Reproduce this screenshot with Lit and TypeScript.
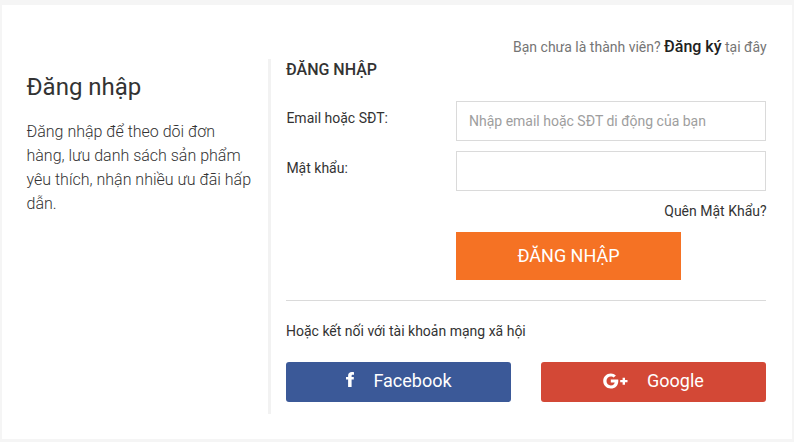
import { LitElement, html, css } from "lit";
import { customElement } from "lit/decorators.js";

const facebookIcon = html`<svg class="fb" width="8" height="16" viewBox="0 0 8 16" fill="currentColor" aria-hidden="true">
  <path d="M8 0.3V2.8H6.9C5.9 2.8 5.6 3.2 5.6 4V5.1H7.8V7.4H5.6V15H2.1V7.4H0V5.1H2.1V3.8C2.1 1.4 3.6 0.1 5.9 0.1C6.8 0.1 7.5 0.2 8 0.3Z"/>
</svg>`;

const googleIcon = html`<svg class="gp" width="25" height="16" viewBox="0 0 25 16" aria-hidden="true">
  <path fill="currentColor" d="M7.8 6.4H15.2C15.3 6.9 15.3 7.4 15.3 7.9C15.3 12.4 12.3 15.5 7.8 15.5C3.5 15.5 0.2 12.2 0.2 8C0.2 3.8 3.5 0.5 7.8 0.5C9.8 0.5 11.6 1.2 12.9 2.5L10.7 4.6C10.1 4.1 9.2 3.6 7.8 3.6C5.4 3.6 3.5 5.5 3.5 8C3.5 10.5 5.4 12.4 7.8 12.4C10.4 12.4 11.5 10.8 11.7 9.4H7.8ZM19.6 4.7H22V7H24.5V9.3H22V11.7H19.6V9.3H17.2V7H19.6Z"/>
</svg>`;

@customElement("app-root")
export class AppRoot extends LitElement {
  static styles = css`
    :host {
      display: block;
      box-sizing: border-box;
      height: 442px;
      padding: 5px 2px 3px;
      background: #f5f5f5;
      font: 14px/20px Roboto, "Noto Sans", sans-serif;
      color: #333;
    }
    *, *::before { box-sizing: border-box; }
    h1, h2, p { margin: 0; }
    a { color: inherit; text-decoration: none; }
    .panel {
      display: flex;
      height: 434px;
      padding: 0 26px 25px 24.5px;
      background: #fff;
    }
    .intro { width: 241.5px; padding-top: 66px; }
    .intro h1 { font-size: 24px; line-height: 32px; font-weight: 400; }
    .intro p { width: 230px; margin-top: 17px; font-size: 16px; line-height: 24px; font-weight: 300; }
    .divider { width: 3px; margin-top: 54px; background: #f2f2f2; }
    .content { flex: 1; padding: 31px 0 0 15px; }
    .join { height: 22px; margin-right: -0.6px; line-height: 22px; text-align: right; color: #757575; white-space: nowrap; }
    .join a { font-size: 16px; font-weight: 500; color: #212121; }
    .content h2 { height: 20px; margin-top: 2px; font-size: 16px; font-weight: 500; }
    form {
      display: grid;
      grid-template-columns: 170px 310px;
      margin-top: 21px;
    }
    label { padding: 7px 0 0 0.4px; }
    input {
      width: 310px;
      height: 40px;
      margin-bottom: 10px;
      padding: 0 12px;
      border: 1px solid #dadada;
      border-radius: 0;
      outline: 0;
      background: #fff;
      font: inherit;
      color: #333;
    }
    input::placeholder { color: #9e9e9e; opacity: 1; }
    .forgot { grid-column: 2; margin-right: -0.6px; text-align: right; }
    .submit {
      grid-column: 2;
      width: 225px;
      height: 48px;
      margin-top: 11px;
      padding: 0;
      border: 0;
      background: #f57224;
      color: #fff;
      font: 400 18px/48px Roboto, sans-serif;
    }
    .social { margin-top: 20px; padding-top: 20px; border-top: 1px solid #dadada; }
    .buttons { display: flex; gap: 30px; margin-top: 21px; }
    .button {
      display: flex;
      align-items: center;
      justify-content: center;
      width: 225px;
      height: 40px;
      padding: 0 0 2px;
      border: 0;
      border-radius: 3px;
      color: #fff;
      font: 400 18px/38px Roboto, sans-serif;
    }
    .facebook { background: #3b5998; }
    .google { background: #d34836; }
    .fb { margin: 0 19px 2px 1px; }
    .gp { margin-right: 19px; }
  `;

  render() {
    return html`
      <div class="panel">
        <aside class="intro">
          <h1>Đăng nhập</h1>
          <p>Đăng nhập để theo dõi đơn hàng, lưu danh sách sản phẩm yêu thích, nhận nhiều ưu đãi hấp dẫn.</p>
        </aside>
        <div class="divider"></div>
        <main class="content">
          <p class="join">Bạn chưa là thành viên? <a href="#">Đăng ký</a> tại đây</p>
          <h2>ĐĂNG NHẬP</h2>
          <form>
            <label for="email">Email hoặc SĐT:</label>
            <input id="email" type="text" placeholder="Nhập email hoặc SĐT di động của bạn" />
            <label for="password">Mật khẩu:</label>
            <input id="password" type="password" />
            <a class="forgot" href="#">Quên Mật Khẩu?</a>
            <button class="submit" type="button">ĐĂNG NHẬP</button>
          </form>
          <section class="social">
            <p>Hoặc kết nối với tài khoản mạng xã hội</p>
            <div class="buttons">
              <button class="button facebook" type="button">${facebookIcon}<span>Facebook</span></button>
              <button class="button google" type="button">${googleIcon}<span>Google</span></button>
            </div>
          </section>
        </main>
      </div>
    `;
  }
}
